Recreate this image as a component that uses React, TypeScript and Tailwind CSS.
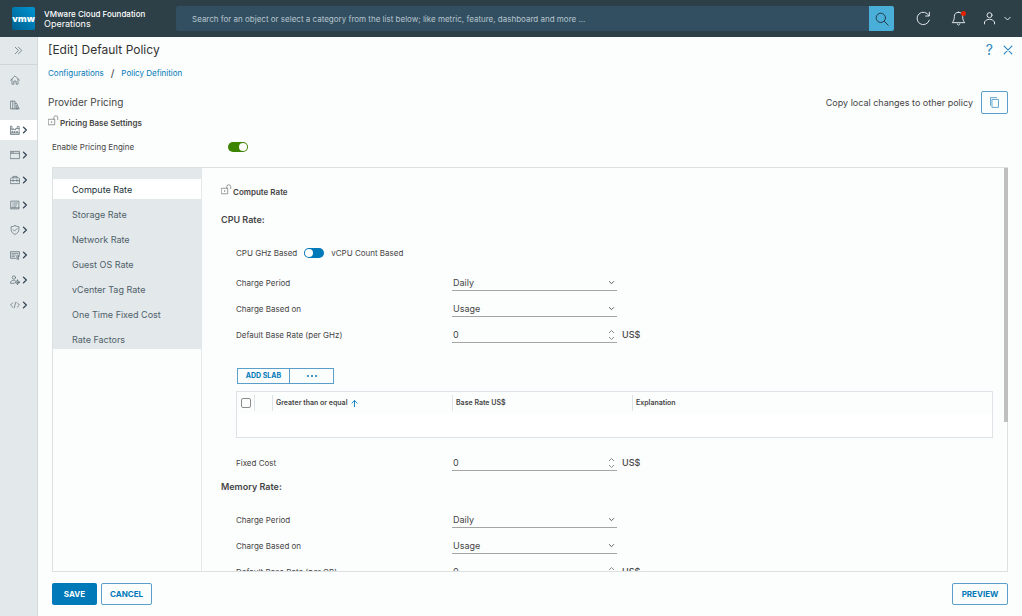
import { useState } from "react";
import type { ReactNode } from "react";

type IconProps = { children: ReactNode; className?: string; weight?: number };

function Icon({ children, className = "size-[10px]", weight = 2.6 }: IconProps) {
  return (
    <svg
      viewBox="0 0 36 36"
      className={`shrink-0 ${className}`}
      fill="none"
      stroke="currentColor"
      strokeWidth={weight}
      strokeLinecap="round"
      strokeLinejoin="round"
      aria-hidden="true"
    >
      {children}
    </svg>
  );
}

const caretDown = <path d="M7 13l11 11 11-11" />;

const navItems: { label: string; expandable: boolean; active?: boolean; icon: ReactNode }[] = [
  {
    label: "Home",
    expandable: false,
    icon: <path d="M2 19L18 3l16 16M7 15v18h7V22h8v11h7V15" />,
  },
  {
    label: "Library",
    expandable: false,
    icon: <path d="M3 4h7v28H3zM10 4h8v28h-8M18 13l5-2 10 21H18M23 20v12M28 27v5" />,
  },
  {
    label: "Data center",
    expandable: true,
    active: true,
    icon: (
      <path d="M2 33V13l9 5v-5l9 5v-5h6V5h7v28zM2 13V4h5v11M8 23h2v4H8zM16 23h2v4h-2zM25 23h2v4h-2zM26 13h7M2 29h31" />
    ),
  },
  {
    label: "Applications",
    expandable: true,
    icon: <path d="M2 5h32v26H2zM2 12h32M6 8.500h1M11 8.500h1" />,
  },
  {
    label: "Toolbox",
    expandable: true,
    icon: <path d="M2 13l3-3h26l3 3v18H2zM11 10V5h14v5M2 20h32M11 17v6M25 17v6" />,
  },
  {
    label: "Reports",
    expandable: true,
    icon: <path d="M4 4h28v28H4zM10 11h2M16 11h11M10 18h2M16 18h8M10 25h2M16 25h5M4 28h28" />,
  },
  {
    label: "Compliance",
    expandable: true,
    icon: <path d="M18 2c4 3 9 4 14 4v11c0 8-6 13-14 17C10 30 4 25 4 17V6c5 0 10-1 14-4zM11 17l5 5 9-9" />,
  },
  {
    label: "Licenses",
    expandable: true,
    icon: (
      <>
        <path d="M20 30H2V6h32v12M7 12h22M7 18h12M7 24h9" />
        <circle cx="28" cy="22" r="4" />
        <path d="M25 26v8l3-2 3 2v-8" />
      </>
    ),
  },
  {
    label: "Administration",
    expandable: true,
    icon: (
      <>
        <circle cx="14" cy="9" r="6" />
        <path d="M15 30H2v-5c3-4 7-6 12-6 2 0 4 0 5 1" />
        <circle cx="27" cy="26" r="6" />
        <circle cx="27" cy="26" r="1.500" />
        <path d="M27 17v3M27 32v3M18 26h3M33 26h3" />
      </>
    ),
  },
  {
    label: "Developer center",
    expandable: true,
    icon: <path d="M10 10l-8 8 8 8M26 10l8 8-8 8M21 8l-6 20" />,
  },
];

const tabs = [
  "Compute Rate",
  "Storage Rate",
  "Network Rate",
  "Guest OS Rate",
  "vCenter Tag Rate",
  "One Time Fixed Cost",
  "Rate Factors",
];

function TopBar() {
  return (
    <header className="flex h-[37px] shrink-0 items-center bg-[#2d4048] pr-[10px] pl-3 text-white">
      <div className="flex w-[164px] shrink-0 items-center gap-[9px]">
        <div className="flex size-[23px] items-center justify-center rounded-[2px] bg-linear-to-bl from-[#0095d3] to-[#00608f] font-['Open_Sans'] text-[9px] font-extrabold">
          vmw
        </div>
        <div className="text-[8px] leading-[10px] whitespace-nowrap">
          <p className="font-medium">VMware Cloud Foundation</p>
          <p className="text-[9px]">Operations</p>
        </div>
      </div>
      <form className="flex h-[25px] flex-1 overflow-hidden rounded-[2px]" onSubmit={(e) => e.preventDefault()}>
        <input
          type="text"
          aria-label="Search"
          placeholder="Search for an object or select a category from the list below; like metric, feature, dashboard and more ..."
          className="min-w-0 flex-1 bg-[#324f62] pl-4 text-[8px] text-white outline-none placeholder:text-[#b8c5cc]"
        />
        <button type="submit" aria-label="Run search" className="flex w-[25px] items-center justify-center bg-[#49afd9] text-[#22343c]">
          <Icon className="size-[14px]" weight={2.4}>
            <circle cx="15" cy="15" r="12" />
            <path d="M24 24l10 10" />
          </Icon>
        </button>
      </form>
      <div className="flex items-center pl-[22px] text-[#dfe5e8]">
        <button type="button" aria-label="Refresh">
          <Icon className="size-[15px]" weight={2.4}>
            <path d="M32 22A15 15 0 1 1 31 11M32 3v9h-9" />
          </Icon>
        </button>
        <button type="button" aria-label="Notifications" className="relative ml-5">
          <Icon className="size-[15px]" weight={2.4}>
            <path d="M18 3c-6 0-10 4-10 10 0 8-2 11-5 15h30c-3-4-5-7-5-15 0-6-4-10-10-10zM15 31c0 4 6 4 6 0" />
          </Icon>
          <span className="absolute top-0 right-0 size-[5px] rounded-full bg-[#e12200]" />
        </button>
        <button type="button" aria-label="Account" className="ml-4 flex items-center gap-[6px]">
          <Icon className="size-[15px]" weight={2.4}>
            <circle cx="18" cy="10" r="6" />
            <path d="M6 31v-5c3-4 7-6 12-6s9 2 12 6v5" />
          </Icon>
          <Icon className="size-[9px]" weight={4}>
            {caretDown}
          </Icon>
        </button>
      </div>
    </header>
  );
}

function SideNav() {
  return (
    <nav aria-label="Main" className="w-[38px] shrink-0 border-r border-[#d3dadd] bg-[#e3e8eb] text-[#5b6b73]">
      <button type="button" aria-label="Expand menu" className="flex h-7 w-full items-center justify-center border-b border-[#cfd6d9]">
        <Icon className="size-[9px]" weight={3}>
          <path d="M5 5l13 13L5 31M18 5l13 13-13 13" />
        </Icon>
      </button>
      <ul className="mt-[5px] flex flex-col gap-[5px]">
        {navItems.map((item) => (
          <li key={item.label}>
            <a
              href="#"
              aria-label={item.label}
              className={`flex h-5 items-center gap-px pl-[10px] ${item.active ? "bg-white" : ""}`}
            >
              <Icon>{item.icon}</Icon>
              {item.expandable && (
                <Icon className="size-2 text-[#314351]" weight={6}>
                  <path d="M11 5l13 13-13 13" />
                </Icon>
              )}
            </a>
          </li>
        ))}
      </ul>
    </nav>
  );
}

function UnlockIcon() {
  return (
    <Icon className="size-[11px] self-start text-[#777]" weight={2.4}>
      <path d="M2 14h20v18H2zM12 21v4M19 14V9a6 6 0 0 1 13 0v6" />
    </Icon>
  );
}

function FieldRow({ id, label, children }: { id: string; label: string; children: ReactNode }) {
  return (
    <div className="flex h-[26px] items-center">
      <label htmlFor={id} className="w-[216px] shrink-0">
        {label}
      </label>
      {children}
    </div>
  );
}

function SelectRow({ id, label, value }: { id: string; label: string; value: string }) {
  return (
    <FieldRow id={id} label={label}>
      <div className="relative w-[165px] border-b border-[#a5a5a5]">
        <select id={id} className="block h-[14px] w-full appearance-none bg-transparent pl-px text-[9px] leading-[14px] outline-none">
          <option>{value}</option>
        </select>
        <span className="pointer-events-none absolute inset-y-0 right-[2px] flex items-center">
          <Icon className="size-[7px]" weight={4.500}>
            {caretDown}
          </Icon>
        </span>
      </div>
    </FieldRow>
  );
}

function AmountRow({ id, label }: { id: string; label: string }) {
  return (
    <FieldRow id={id} label={label}>
      <div className="relative w-[165px] border-b border-[#a5a5a5]">
        <input
          id={id}
          type="number"
          defaultValue={0}
          className="block h-[14px] w-full [appearance:textfield] bg-transparent pl-px text-[9px] leading-[14px] outline-none [&::-webkit-inner-spin-button]:appearance-none"
        />
        <span className="pointer-events-none absolute inset-y-0 right-[2px] flex items-center text-[#8c8c8c]">
          <svg viewBox="0 0 7 12" className="h-3 w-[7px]" fill="none" stroke="currentColor" aria-hidden="true">
            <path d="M1 4l2.500-2.500L6 4M1 8l2.500 2.500L6 8" />
          </svg>
        </span>
      </div>
      <span className="pl-[5px] text-[9px] font-medium">US$</span>
    </FieldRow>
  );
}

function RatePanel() {
  const [progress, setProgress] = useState(0);
  return (
    <section className="relative min-w-0 flex-1">
      <div
        className="h-full overflow-y-auto pr-[14px] pl-[19px] [scrollbar-width:none]"
        onScroll={(e) => setProgress(e.currentTarget.scrollTop / e.currentTarget.scrollHeight)}
      >
        <h3 className="mt-4 flex h-4 items-center gap-px text-[8px] font-semibold">
          <UnlockIcon />
          Compute Rate
        </h3>
        <h4 className="mt-[14px] text-[9px] leading-3 font-semibold">CPU Rate:</h4>
        <div className="pl-[15px]">
          <label className="mt-[21px] mb-[11px] flex h-3 items-center gap-[7px]">
            CPU GHz Based
            <input
              type="checkbox"
              role="switch"
              className="h-[10px] w-5 appearance-none rounded-full bg-[#0079b8] before:m-px before:block before:size-2 before:rounded-full before:bg-white checked:before:ml-[11px]"
            />
            vCPU Count Based
          </label>
          <SelectRow id="cpu-period" label="Charge Period" value="Daily" />
          <SelectRow id="cpu-based" label="Charge Based on" value="Usage" />
          <AmountRow id="cpu-base" label="Default Base Rate (per GHz)" />
          <div className="mt-5 ml-px flex h-4 w-[97px] border border-[#5a9fc9] text-[7px] font-bold text-[#0079b8]">
            <button type="button" className="w-[52px] border-r border-[#5a9fc9] whitespace-nowrap">
              ADD SLAB
            </button>
            <button type="button" aria-label="More actions" className="flex flex-1 items-center justify-center gap-[2px]">
              <span className="size-[2px] rounded-full bg-current" />
              <span className="size-[2px] rounded-full bg-current" />
              <span className="size-[2px] rounded-full bg-current" />
            </button>
          </div>
          <div className="mt-[7px] h-[47px] border border-[#dde3e6] bg-white">
            <table className="w-full table-fixed border-collapse bg-[#fcfdfd] text-left text-[7px]">
              <thead>
                <tr className="h-[22px]">
                  <th className="w-[18px] p-0">
                    <div className="flex h-4 items-center border-r border-[#dde3e6] pl-1">
                      <input
                        type="checkbox"
                        aria-label="Select all slabs"
                        className="size-[10px] appearance-none rounded-[2px] border border-[#8c8c8c]"
                      />
                    </div>
                  </th>
                  <th className="w-[18px] p-0">
                    <div className="h-4 border-r border-[#dde3e6]" />
                  </th>
                  <th className="w-[180px] p-0 font-semibold">
                    <div className="flex h-4 items-center gap-1 border-r border-[#dde3e6] pl-[3px]">
                      Greater than or equal
                      <Icon className="size-[7px] text-[#0079b8]" weight={4.500}>
                        <path d="M18 34V3M5 16L18 3l13 13" />
                      </Icon>
                    </div>
                  </th>
                  <th className="w-[180px] p-0 font-semibold">
                    <div className="flex h-4 items-center border-r border-[#dde3e6] pl-[3px]">Base Rate US$</div>
                  </th>
                  <th className="p-0 pl-[3px] font-semibold">Explanation</th>
                </tr>
              </thead>
            </table>
          </div>
          <div className="mt-[12px]">
            <AmountRow id="cpu-fixed" label="Fixed Cost" />
          </div>
        </div>
        <h4 className="mt-[5px] text-[9px] leading-3 font-semibold">Memory Rate:</h4>
        <div className="mt-[14px] pb-[220px] pl-[15px]">
          <SelectRow id="mem-period" label="Charge Period" value="Daily" />
          <SelectRow id="mem-based" label="Charge Based on" value="Usage" />
          <AmountRow id="mem-base" label="Default Base Rate (per GB)" />
        </div>
      </div>
      <div className="absolute right-[-1px] h-[63%] w-1 bg-[#bfbfbf]" style={{ top: `${progress * 100}%` }} />
    </section>
  );
}

export default function App() {
  return (
    <div className="flex h-screen flex-col bg-[#fcfdfd] font-['Inter',sans-serif] text-[8px] text-[#454545]">
      <TopBar />
      <div className="flex min-h-0 flex-1">
        <SideNav />
        <main className="flex min-w-0 flex-1 flex-col pr-[14px] pl-[10px]">
          <div className="mt-[5px] flex h-4 items-center justify-between">
            <h1 className="text-[12px] text-[#333]">[Edit] Default Policy</h1>
            <div className="-mr-[5px] flex items-center gap-[10px] text-[#2b87bd]">
              <button type="button" aria-label="Help" className="text-[14px] leading-4">
                ?
              </button>
              <button type="button" aria-label="Close">
                <Icon weight={4}>
                  <path d="M4 4l28 28M32 4L4 32" />
                </Icon>
              </button>
            </div>
          </div>
          <nav aria-label="Breadcrumb" className="mt-[9px] flex h-3 items-center gap-[7px] text-[#0079b8]">
            <a href="#">Configurations</a>
            <span className="text-[10px] text-[#333]">/</span>
            <a href="#">Policy Definition</a>
          </nav>
          <div className="mt-3 flex h-[23px] items-center justify-between">
            <h2 className="text-[10px]">Provider Pricing</h2>
            <div className="flex items-center gap-2 text-[9px]">
              Copy local changes to other policy
              <button
                type="button"
                aria-label="Copy"
                className="flex h-[23px] w-[27px] items-center justify-center rounded-[2px] border border-[#5a9fc9] text-[#5a9fc9]"
              >
                <Icon className="size-[11px]" weight={3}>
                  <path d="M11 8h20v26H11zM5 27V2h20" />
                </Icon>
              </button>
            </div>
          </div>
          <h3 className="mt-px flex h-4 items-center gap-px text-[8px] font-semibold">
            <UnlockIcon />
            Pricing Base Settings
          </h3>
          <div className="mt-[10px] flex h-3 items-center pl-1">
            <label htmlFor="engine" className="w-[176px]">
              Enable Pricing Engine
            </label>
            <input
              id="engine"
              type="checkbox"
              role="switch"
              defaultChecked
              className="h-[10px] w-5 appearance-none rounded-full bg-[#3c8500] before:m-px before:block before:size-2 before:rounded-full before:bg-white checked:before:ml-[11px]"
            />
          </div>
          <div className="mt-[14px] ml-1 flex min-h-0 flex-1 border border-[#dde1e3]">
            <div className="w-[149px] shrink-0">
              <div role="tablist" aria-label="Rates" className="flex flex-col gap-[5px] bg-[#e3e8eb] pt-[11px]">
                {tabs.map((tab, i) => (
                  <button
                    key={tab}
                    type="button"
                    role="tab"
                    aria-selected={i === 0}
                    className={`h-5 pt-px pl-[19px] text-left text-[9px] ${i === 0 ? "bg-white text-[#21333b]" : "text-[#4f6169]"}`}
                  >
                    {tab}
                  </button>
                ))}
              </div>
            </div>
            <div className="-ml-px flex min-w-0 flex-1 border-l border-[#e3e8eb]">
              <RatePanel />
            </div>
          </div>
          <footer className="flex h-11 shrink-0 items-center gap-1 pl-1 text-[8px] font-bold text-[#0079b8]">
            <button type="button" className="h-[22px] w-[45px] rounded-[2px] bg-[#0079b8] text-white">
              SAVE
            </button>
            <button type="button" className="h-[22px] w-[51px] rounded-[2px] border border-[#5a9fc9]">
              CANCEL
            </button>
            <button type="button" className="ml-auto h-[22px] w-14 rounded-[2px] border border-[#5a9fc9]">
              PREVIEW
            </button>
          </footer>
        </main>
      </div>
    </div>
  );
}
